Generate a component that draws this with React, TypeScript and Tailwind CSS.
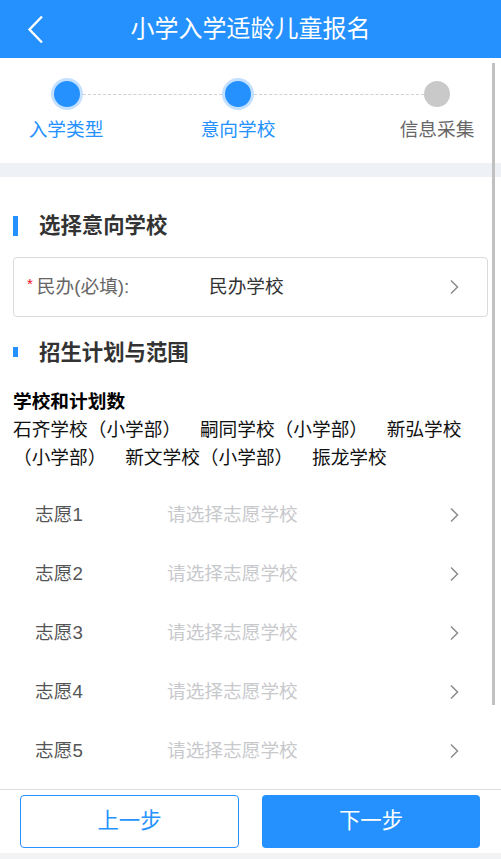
import React from "react";

const BLUE = "bg-[#2491ff]";

function Arrow() {
  return (
    <svg width="10" height="16" viewBox="0 0 10 16" fill="none" className="shrink-0">
      <path d="M2 1.5 L8.5 8 L2 14.5" stroke="#8a8b8d" strokeWidth="1.5" strokeLinejoin="miter" />
    </svg>
  );
}

function SectionTitle({ title, short }: { title: string; short?: boolean }) {
  return (
    <div className="flex items-start h-[20px]">
      <div
        className={
          short
            ? "ml-[13px] mt-[4px] w-[5px] h-[10px] bg-[#2491ff]"
            : "ml-[13px] w-[5px] h-[20px] bg-[#2491ff]"
        }
      />
      <span className="ml-[21px] text-[21.4px] leading-[20px] font-bold text-[#333]">{title}</span>
    </div>
  );
}

export default function App() {
  // pieces of the school list; "gap" marks the end of one school
  const schools: { t: string; gap: boolean }[] = [
    { t: "石齐学校（小学部）", gap: true },
    { t: "嗣同学校（小学部）", gap: true },
    { t: "新弘学校", gap: false },
    { t: "（小学部）", gap: true },
    { t: "新文学校（小学部）", gap: true },
    { t: "振龙学校", gap: true },
  ];
  const wishes = [1, 2, 3, 4, 5];

  return (
    <div className="w-full h-[859px] flex flex-col overflow-hidden bg-white font-['Liberation_Sans','Noto_Sans_CJK_SC',sans-serif]">
      {/* Header */}
      <div className={`h-[58px] shrink-0 ${BLUE} grid grid-cols-[70px_1fr_70px] items-center`}>
        <div className="pl-[27px] flex items-center">
          <svg width="17" height="29" viewBox="0 0 17 29" fill="none">
            <path d="M15 1.5 L2.5 14.5 L15 27.5" stroke="white" strokeWidth="2.4" />
          </svg>
        </div>
        <h1 className="text-center text-white text-[24px] leading-[30px]">小学入学适龄儿童报名</h1>
        <div />
      </div>

      {/* Scroll area */}
      <div className="relative h-[731px] shrink-0 overflow-hidden">
        {/* Steps */}
        <div className="h-[105px] pt-[20px]">
          <div className="flex items-center pl-[51px]">
            <div className="w-[32px] h-[32px] rounded-full bg-[#2491ff] border-[3px] border-[#c4e0ff] shrink-0" />
            <div className="w-[139px] border-t border-dashed border-[#cfcfcf]" />
            <div className="w-[32px] h-[32px] rounded-full bg-[#2491ff] border-[3px] border-[#c4e0ff] shrink-0" />
            <div className="w-[170px] border-t border-dashed border-[#cfcfcf]" />
            <div className="w-[26px] h-[26px] rounded-full bg-[#c9c9c9] shrink-0" />
          </div>
          <div className="flex mt-[8px] pl-[28px] text-[18.7px] leading-[24px]">
            <span className="w-[76px] text-center text-[#2491ff] whitespace-nowrap">入学类型</span>
            <span className="ml-[96px] w-[76px] text-center text-[#2491ff] whitespace-nowrap">意向学校</span>
            <span className="ml-[123px] w-[76px] text-center text-[#666] whitespace-nowrap">信息采集</span>
          </div>
        </div>

        <div className="h-[14px] bg-[#eef2f6]" />

        {/* Select school */}
        <div className="pt-[39px]">
          <SectionTitle title="选择意向学校" />
          <div className="mx-[13px] mt-[21px] h-[60px] border border-[#dadada] rounded-[4px] flex items-center pl-[13px]">
            <div className="w-[182px] flex items-center text-[18.7px] leading-[24px] text-[#666]">
              <span className="text-[#ee0a24] text-[15px] relative -top-[3px]">*</span>
              <span className="ml-[4px]">民办(必填):</span>
            </div>
            <span className="text-[18.7px] leading-[24px] text-[#333]">民办学校</span>
            <div className="ml-auto mr-[28px]">
              <Arrow />
            </div>
          </div>
        </div>

        {/* Plan */}
        <div className="mt-[26px]">
          <SectionTitle title="招生计划与范围" short />
          <div className="mt-[25px] px-[13px] text-[18.7px] leading-[28px] font-bold text-black">学校和计划数</div>
          <div className="px-[13px] flex flex-wrap text-[18.7px] leading-[28px] text-[#111]">
            {schools.map((s) => (
              <span key={s.t} className={s.gap ? "block h-[28px] mr-[18.7px] whitespace-nowrap" : "block h-[28px] whitespace-nowrap"}>
                {s.t}
              </span>
            ))}
          </div>
        </div>

        {/* Wishes */}
        <div className="mt-[13px]">
          {wishes.map((n) => (
            <div key={n} className="h-[59px] flex items-center pl-[35px] text-[18.7px] leading-[24px]">
              <span className="w-[132px] text-[#555]">志愿{n}</span>
              <span className="text-[#c8c9cc]">请选择志愿学校</span>
              <div className="ml-auto mr-[42px]">
                <Arrow />
              </div>
            </div>
          ))}
        </div>

        {/* scrollbar thumb */}
        <div className="absolute right-[6px] top-[5px] w-[3px] h-[642px] bg-[#c1c1c1]" />
      </div>

      {/* Footer */}
      <div className="shrink-0 border-t border-[#dddddd] bg-white">
        <div className="flex px-[20px] py-[5px] gap-[23px]">
          <button className="w-[219px] h-[53px] rounded-[4px] border border-[#2491ff] text-[#2491ff] text-[21.4px] bg-white">
            上一步
          </button>
          <button className={`w-[218px] h-[53px] rounded-[4px] ${BLUE} text-white text-[21.4px]`}>下一步</button>
        </div>
        <div className="h-[6px] bg-[#f2f3f5]" />
      </div>
    </div>
  );
}
